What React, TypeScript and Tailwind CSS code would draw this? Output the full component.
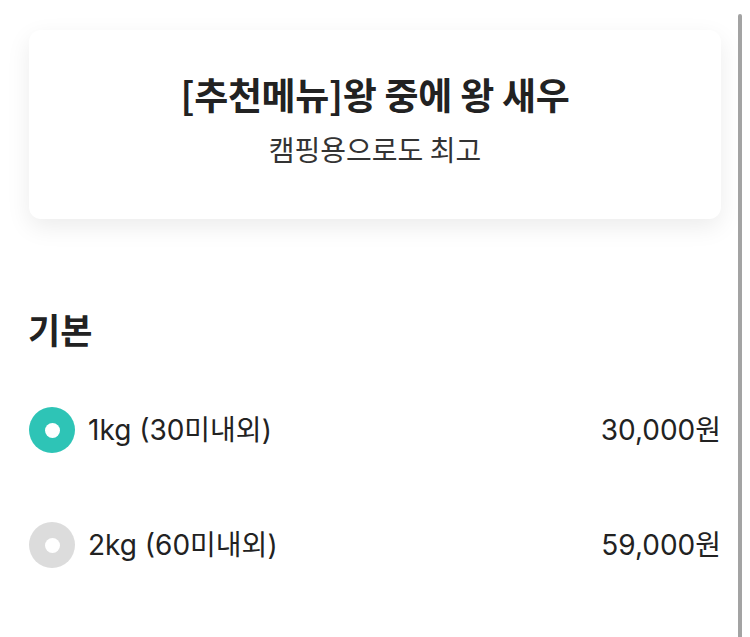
import React from "react"

const options = [
  { label: "1kg (30미내외)", price: "30,000원", selected: true },
  { label: "2kg (60미내외)", price: "59,000원", selected: false },
]

const cjk = '"Noto Sans CJK KR", "Noto Sans", sans-serif'
const mixed = 'Inter, "Noto Sans CJK KR", sans-serif'

export default function App() {
  return (
    <div
      className="relative w-[750px] h-[637px] overflow-hidden bg-white text-[#222]"
      style={{ fontFamily: cjk }}
    >
      <div className="px-[29px] pt-[30px]">
        {/* Title card */}
        <div className="h-[189px] rounded-[12px] bg-white shadow-[0_8px_24px_rgba(0,0,0,0.08)] flex flex-col items-center justify-center">
          <h1 className="text-[37px] font-bold leading-[46px] tracking-[-0.3px] text-[#222] -mt-[10px]">
            [추천메뉴]왕 중에 왕 새우
          </h1>
          <p className="text-[28px] leading-[38px] text-[#333] mt-[13px]">캠핑용으로도 최고</p>
        </div>

        {/* Options */}
        <h2 className="mt-[88px] text-[35px] font-bold leading-[44px] text-[#222] -ml-[1px]">기본</h2>
        <div className="mt-[56px] flex flex-col gap-[69px]">
          {options.map((o) => (
            <div key={o.label} className="flex items-center h-[46px]">
              <span
                className={
                  "w-[46px] h-[46px] rounded-full flex items-center justify-center shrink-0 " +
                  (o.selected ? "bg-[#2ec4b6]" : "bg-[#dcdcdc]")
                }
              >
                <span className="w-[15px] h-[15px] rounded-full bg-white" />
              </span>
              <span className="ml-[13px] text-[28px] text-[#222]" style={{ fontFamily: mixed }}>
                {o.label}
              </span>
              <span className="ml-auto text-[28px] text-[#222]" style={{ fontFamily: mixed }}>
                {o.price}
              </span>
            </div>
          ))}
        </div>
      </div>

      {/* Scrollbar */}
      <div className="absolute left-[738px] top-[14px] bottom-0 w-[4px] rounded-t-full bg-[#a3a3a3]" />
    </div>
  )
}
